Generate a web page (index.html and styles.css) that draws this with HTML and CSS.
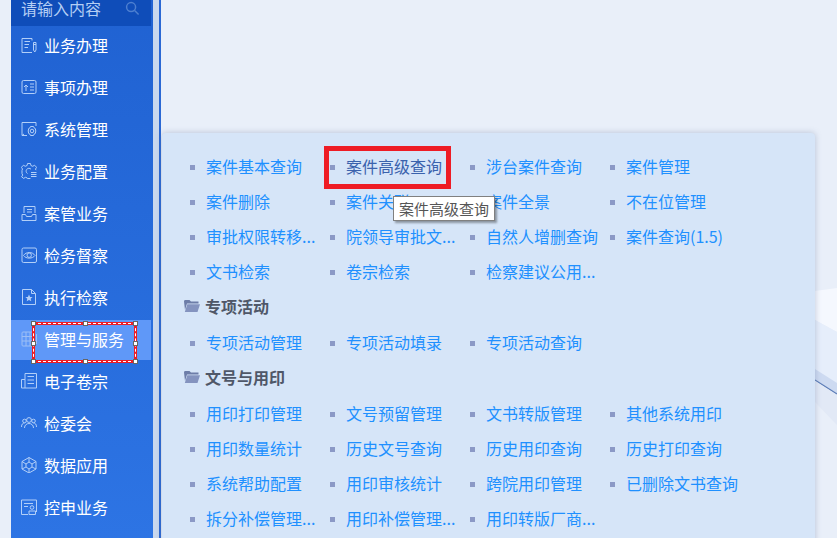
FILE: index.html
```html
<!DOCTYPE html>
<html lang="zh-CN">
<head>
  <meta charset="UTF-8">
  <title>案件查询</title>
  <link rel="stylesheet" href="styles.css">
</head>
<body>
  <svg class="bg-art" viewBox="0 0 837 538" aria-hidden="true">
    <polygon points="815,291 837,288 837,332 815,320" fill="#f5f8fe"/>
    <polygon points="815,320 837,332 837,384 815,370" fill="#e6eefb"/>
    <polygon points="815,369 837,383 837,395 815,381" fill="#cddaf1"/>
    <line x1="815" y1="380" x2="837" y2="394" stroke="#5f7fb8" stroke-width="1.2"/>
    <polygon points="815,381 837,395 837,425 815,402" fill="#e2e9f6"/>
  </svg>

  <aside class="sidebar">
    <div class="search">
      <span>请输入内容</span>
      <svg class="search-icon" viewBox="0 0 16 16"><circle cx="6.500" cy="6.500" r="4.800"/><line x1="10.200" y1="10.200" x2="14.500" y2="14.500"/></svg>
    </div>
    <ul class="menu">
      <li><svg viewBox="0 0 16 16"><path d="M11 3.500V1.500H1v14h10M3.500 4.500H9M3.500 7.500H8M3.500 10.500H7"/><path d="M12.500 5.500h2.500V13l-1.250 2-1.250-2zM12.500 7.500h2.500"/></svg>业务办理</li>
      <li><svg viewBox="0 0 16 16"><rect x="1" y="1.500" width="14" height="13" rx="1.500"/><path d="M5 12V6M3 8l2-2 2 2M9 5h4M9 8h4M9 11h4"/></svg>事项办理</li>
      <li><svg viewBox="0 0 16 16"><path d="M15 5V1.500H1v13M1 14.500l2-1.500M1 14.500h5"/><path d="M9.500 5.500h3l.5 1.300 1.300.7.500 2.500-.5 2.500-1.300.7-.5 1.300h-3l-.5-1.300-1.300-.7-.5-2.500.5-2.500 1.300-.7z"/><circle cx="11" cy="10" r="1.800"/></svg>系统管理</li>
      <li><svg viewBox="0 0 16 16"><path d="M15 7.200l-.5-1.200 1.100-1.700-2.100-2.100-1.700 1.100-1.900-.8-.4-2h-3l-.4 2-1.900.8-1.700-1.100-2.100 2.100 1.100 1.700-.5 1.500v3l.7 1.600-1.100 1.700 2.100 1.600 1.700-1.100 1.700.6.300.6h3"/><path d="M10 6.200A2.800 2.800 0 1 0 6.500 10.500M10 9.500h5.500M10 11.500h5.500M10 13.500h5.500"/></svg>业务配置</li>
      <li><svg viewBox="0 0 16 16"><path d="M3 8V1.500h11V8M6 4.500h5M6 7h5"/><path d="M1 9.500v6h14v-6h-3.500l-1 2h-5l-1-2z"/></svg>案管业务</li>
      <li><svg viewBox="0 0 16 16"><rect x="1" y="1" width="14.500" height="14.500" rx="1.500"/><path d="M2.500 8.500C5 4.500 11.500 4.500 14 8.500 11.500 12 5 12 2.500 8.500z"/><circle cx="8.200" cy="8.200" r="2.200"/></svg>检务督察</li>
      <li><svg viewBox="0 0 16 16"><path d="M1.500 .5h9L14.500 4.500v11h-13zM10.500 .5v4h4"/><path class="solid" d="M8 5.500l1.100 2.400 2.500.2-1.900 1.700.6 2.500L8 11.100l-2.300 1.200.6-2.500-1.900-1.700 2.500-.2z"/></svg>执行检察</li>
      <li class="active"><svg viewBox="0 0 16 16"><rect x="1" y="1" width="12" height="14" rx="1"/><path d="M1 5.500h12M1 10h12M5 1v14M9 1v14M15.500 3v10"/></svg>管理与服务</li>
      <li><svg viewBox="0 0 16 16"><path d="M4 6.500V.5h11.500v14.500H.5V6.500H4v8.500M6.500 3.500h6.500M6.500 7h6.500M6.500 10.500h6.500"/></svg>电子卷宗</li>
      <li><svg viewBox="0 0 16 16"><circle cx="8" cy="5" r="2.400"/><circle cx="3.500" cy="6" r="1.800"/><circle cx="12.500" cy="6" r="1.800"/><path d="M3.500 13c0-6 9-6 9 0M.5 12c0-3 1.500-4 3-4M15.500 12c0-3-1.500-4-3-4"/></svg>检委会</li>
      <li><svg viewBox="0 0 16 16"><path d="M8 .5l7 4v7.500l-7 4-7-4V4.500zM8 5l3 2v3l-3 2-3-2V7zM8 .5V5M15 4.500L11 7M1 4.500L5 7M8 16v-4M1 12l4-2M15 12l-4-2"/></svg>数据应用</li>
      <li><svg viewBox="0 0 16 16"><path d="M15.500 13V1H.5v14.500H7M3 4.500h9M3 7.500h4"/><circle cx="11" cy="8.500" r="1.800"/><path d="M8 15.500v-3.500h6.500v3.500z"/></svg>控申业务</li>
    </ul>
  </aside>
  <div class="divider"></div>

  <main class="content">
    <section class="panel">
      <ul class="links">
        <li>案件基本查询</li>
        <li class="current">案件高级查询</li>
        <li>涉台案件查询</li>
        <li>案件管理</li>
        <li>案件删除</li>
        <li>案件关联</li>
        <li>案件全景</li>
        <li>不在位管理</li>
        <li>审批权限转移...</li>
        <li>院领导审批文...</li>
        <li>自然人增删查询</li>
        <li>案件查询(1.5)</li>
        <li>文书检索</li>
        <li>卷宗检索</li>
        <li>检察建议公用...</li>
      </ul>
      <h3><svg viewBox="0 0 16 14"><path class="back" d="M0 2.500C0 1.500.5 1 1.500 1h4L7 2.500h7.500v2H3L1 11z"/><path d="M3.300 5.200H16L13.500 13H.8z"/></svg>专项活动</h3>
      <ul class="links">
        <li>专项活动管理</li>
        <li>专项活动填录</li>
        <li>专项活动查询</li>
      </ul>
      <h3><svg viewBox="0 0 16 14"><path class="back" d="M0 2.500C0 1.500.5 1 1.500 1h4L7 2.500h7.500v2H3L1 11z"/><path d="M3.300 5.200H16L13.500 13H.8z"/></svg>文号与用印</h3>
      <ul class="links">
        <li>用印打印管理</li>
        <li>文号预留管理</li>
        <li>文书转版管理</li>
        <li>其他系统用印</li>
        <li>用印数量统计</li>
        <li>历史文号查询</li>
        <li>历史用印查询</li>
        <li>历史打印查询</li>
        <li>系统帮助配置</li>
        <li>用印审核统计</li>
        <li>跨院用印管理</li>
        <li>已删除文书查询</li>
        <li>拆分补偿管理...</li>
        <li>用印补偿管理...</li>
        <li>用印转版厂商...</li>
      </ul>
    </section>
  </main>

  <div class="mark-menu">
    <i class="h tl"></i><i class="h tc"></i><i class="h tr"></i>
    <i class="h ml"></i><i class="h mr"></i>
    <i class="h bl"></i><i class="h bc"></i><i class="h br"></i>
  </div>
  <div class="mark-link"></div>
  <div class="tooltip">案件高级查询</div>
</body>
</html>
```

FILE: styles.css
```css
* { box-sizing: border-box; }
html, body { height: 538px; overflow: hidden; }
body {
  margin: 0;
  display: flex;
  align-items: flex-start;
  position: relative;
  background: #e9eff9;
  font-family: "Noto Sans CJK SC", "Noto Sans", sans-serif;
  font-size: 16px;
}
ul { list-style: none; margin: 0; padding: 0; }

.bg-art { position: absolute; left: 0; top: 0; width: 837px; height: 538px; }

.sidebar {
  position: relative;
  flex: none;
  width: 148px;
  height: 538px;
  margin-left: 11px;
  background: linear-gradient(#2062d2, #2d74e4);
  border-right: 6px solid #c9d8ee;
}
.search {
  display: flex;
  justify-content: space-between;
  align-items: center;
  width: 140px;
  height: 26px;
  padding: 0 11px 9px 10px;
  background: #0f4db9;
  color: #b4cef4;
  line-height: 17px;
}
.search-icon { width: 15px; height: 15px; fill: none; stroke: #4d7fd0; stroke-width: 1.6; }

.menu { margin-top: -2px; }
.menu li {
  display: flex;
  align-items: center;
  gap: 7px;
  width: 140px;
  height: 42px;
  padding-left: 10px;
  color: #fff;
  line-height: 42px;
}
.menu svg {
  flex: none;
  width: 16px;
  height: 16px;
  fill: none;
  stroke: #b2cff8;
  stroke-width: 1;
}
.menu .solid { fill: #b2cff8; stroke: none; }
.menu .active { height: 40px; margin-top: 2px; padding-bottom: 2px; background: #5f98f8; }
.menu .active svg { stroke: #9dbff6; }

.divider { flex: none; width: 2px; height: 538px; background: #2a68d4; }

.content { position: relative; flex: 1; padding: 133px 22px 0 1px; }
.panel {
  height: 420px;
  padding: 16px 0 0 20px;
  background: #d6e5f8;
  border-radius: 4px;
  box-shadow: 0 0 6px rgba(90, 110, 150, 0.35);
}
.links { display: grid; grid-template-columns: repeat(4, 140px); grid-auto-rows: 35px; }
.links li {
  position: relative;
  padding-left: 24px;
  color: #2090ff;
  line-height: 35px;
  white-space: nowrap;
}
.links li::before {
  content: "";
  position: absolute;
  left: 8px;
  top: 16px;
  width: 5px;
  height: 5px;
  background: #8b99c6;
}
.links .current { color: #3a62ad; }
.panel h3 {
  display: flex;
  align-items: center;
  gap: 5px;
  height: 35px;
  margin: 0 0 1px;
  padding-bottom: 2px;
  color: #4f5768;
  font-size: 16px;
  font-weight: 700;
}
.panel h3 svg { width: 16px; height: 14px; margin-left: 2px; fill: #8493bf; }
.panel h3 .back { fill: #6d7da8; }

.mark-menu {
  position: absolute;
  left: 32px;
  top: 322px;
  width: 105px;
  height: 41px;
  border: 3px solid #ee1c25;
  outline: 1px dashed #fff;
  outline-offset: -2px;
}
.h { position: absolute; width: 5px; height: 5px; background: #fff; border: 1px solid #666; }
.tl { left: -4px; top: -4px; }
.tc { left: 48px; top: -4px; }
.tr { right: -4px; top: -4px; }
.ml { left: -4px; top: 16px; }
.mr { right: -4px; top: 16px; }
.bl { left: -4px; bottom: -4px; }
.bc { left: 48px; bottom: -4px; }
.br { right: -4px; bottom: -4px; }

.mark-link {
  position: absolute;
  left: 324px;
  top: 146px;
  width: 127px;
  height: 43px;
  border: 5px solid #ee1c25;
}
.tooltip {
  position: absolute;
  left: 393px;
  top: 196px;
  width: 102px;
  height: 25px;
  background: #fff;
  border: 1px solid #808080;
  box-shadow: 2px 2px 2px rgba(0, 0, 0, 0.35);
  color: #555;
  font-size: 15px;
  line-height: 23px;
  text-align: center;
}
```
